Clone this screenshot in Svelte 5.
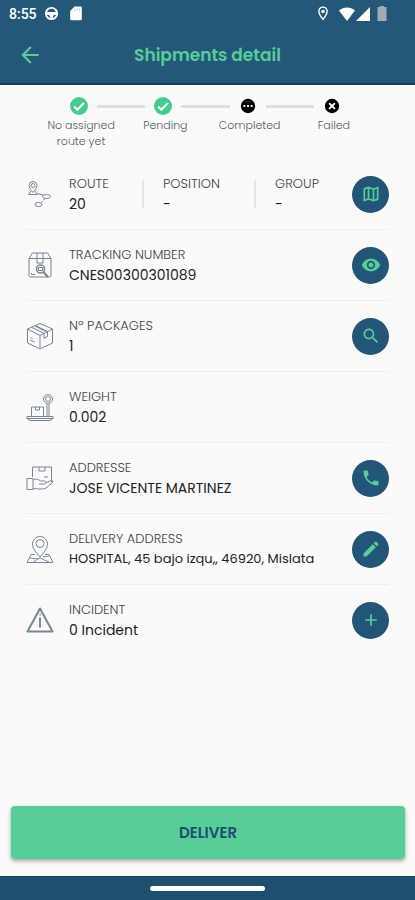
<script>
	const steps = [
		{ label: 'No assigned route yet', state: 'done' },
		{ label: 'Pending', state: 'done' },
		{ label: 'Completed', state: 'waiting' },
		{ label: 'Failed', state: 'failed' }
	]

	const rows = [
		{
			icon: 'route',
			fields: [
				{ label: 'ROUTE', value: '20' },
				{ label: 'POSITION', value: '-' },
				{ label: 'GROUP', value: '-' }
			],
			action: 'map',
			title: 'Show map'
		},
		{ icon: 'tracking', fields: [{ label: 'TRACKING NUMBER', value: 'CNES00300301089' }], action: 'eye', title: 'View tracking' },
		{ icon: 'box', fields: [{ label: 'Nº PACKAGES', value: '1' }], action: 'search', title: 'Search packages' },
		{ icon: 'scale', fields: [{ label: 'WEIGHT', value: '0.002' }] },
		{ icon: 'hand', fields: [{ label: 'ADDRESSE', value: 'JOSE VICENTE MARTINEZ' }], action: 'phone', title: 'Call' },
		{ icon: 'pin', fields: [{ label: 'DELIVERY ADDRESS', value: 'HOSPITAL, 45 bajo izqu,, 46920, Mislata', long: true }], action: 'edit', title: 'Edit address' },
		{ icon: 'warning', fields: [{ label: 'INCIDENT', value: '0 Incident' }], action: 'plus', title: 'Add incident' }
	]

	// material glyphs, 24x24
	const glyphs = {
		map: 'M20.5 3l-.16.03L15 5.1 9 3 3.36 4.9c-.21.07-.36.25-.36.48V20.5c0 .28.22.5.5.5l.16-.03L9 18.9l6 2.1 5.64-1.9c.21-.07.36-.25.36-.48V3.5c0-.28-.22-.5-.5-.5zM10 5.47l4 1.4v11.66l-4-1.4V5.47zm-5 .99l3-1.01v11.7l-3 1.16V6.46zm14 11.08l-3 1.01V6.86l3-1.16v11.84z',
		eye: 'M12 4.5C7 4.5 2.73 7.61 1 12c1.73 4.39 6 7.5 11 7.5s9.27-3.11 11-7.5c-1.73-4.39-6-7.5-11-7.5zM12 17c-2.76 0-5-2.24-5-5s2.24-5 5-5 5 2.24 5 5-2.24 5-5 5zm0-8c-1.66 0-3 1.34-3 3s1.34 3 3 3 3-1.34 3-3-1.34-3-3-3z',
		search: 'M15.5 14h-.79l-.28-.27C15.41 12.59 16 11.11 16 9.5 16 5.91 13.09 3 9.5 3S3 5.91 3 9.5 5.91 16 9.5 16c1.61 0 3.09-.59 4.23-1.57l.27.28v.79l5 4.99L20.49 19l-4.99-5zm-6 0C7.01 14 5 11.99 5 9.5S7.01 5 9.5 5 14 7.01 14 9.5 11.99 14 9.5 14z',
		phone: 'M6.62 10.79c1.44 2.83 3.76 5.14 6.59 6.59l2.2-2.2c.27-.27.67-.36 1.02-.24 1.12.37 2.33.57 3.57.57.55 0 1 .45 1 1V20c0 .55-.45 1-1 1-9.39 0-17-7.61-17-17 0-.55.45-1 1-1h3.5c.55 0 1 .45 1 1 0 1.25.2 2.45.57 3.57.11.35.03.74-.25 1.02l-2.2 2.2z',
		edit: 'M3 17.25V21h3.75L17.81 9.94l-3.75-3.75L3 17.25zM20.71 7.04c.39-.39.39-1.02 0-1.41l-2.34-2.34c-.39-.39-1.02-.39-1.41 0l-1.83 1.83 3.75 3.75 1.83-1.83z',
		plus: 'M19 13h-6v6h-2v-6H5v-2h6V5h2v6h6v2z'
	}
</script>

<div class="screen">
	<header>
		<div class="status">
			<span class="time">8:55</span>
			<svg class="wheel" viewBox="0 0 16 16" width="15" height="15">
				<circle cx="8" cy="8" r="6" fill="none" stroke="#fff" stroke-width="2" />
				<path d="M2 6.5h12v3H10.5L9 13H7L5.5 9.5H2z" fill="#fff" />
			</svg>
			<svg viewBox="0 0 12 15" width="12" height="15">
				<path d="M4.5 .5H10.5a1.3 1.3 0 0 1 1.3 1.3V13a1.3 1.3 0 0 1-1.3 1.3H1.5A1.3 1.3 0 0 1 .2 13V5z" fill="#fff" />
				<path d="M5 2.5v2M7.3 2.5v2M9.5 2.5v2" stroke="#c8d2da" stroke-width="1" />
			</svg>
			<svg class="location" viewBox="0 0 12 16" width="12" height="15">
				<path d="M6 1.2a4.4 4.4 0 0 0-4.4 4.4C1.6 9 6 14.3 6 14.3S10.4 9 10.4 5.6A4.4 4.4 0 0 0 6 1.2z" fill="none" stroke="#fff" stroke-width="1.5" />
				<circle cx="6" cy="5.8" r="1.9" fill="#fff" />
			</svg>
			<svg class="wifi" viewBox="0 0 16 14" width="16" height="14">
				<path d="M8 14L0 3.5C4.5-.5 11.5-.5 16 3.5z" fill="#fff" />
			</svg>
			<svg viewBox="0 0 14 14" width="14" height="14">
				<path d="M14 0v14H0z" fill="#fff" />
			</svg>
			<svg class="battery" viewBox="0 0 10 15" width="10" height="15">
				<path d="M3 0h4v1h2.5V15h-9V1H3z" fill="#a3acb6" />
			</svg>
		</div>
		<div class="bar">
			<button class="back" aria-label="Back">
				<svg viewBox="0 0 24 24" width="26" height="26">
					<path d="M20 11H7.83l5.59-5.59L12 4l-8 8 8 8 1.41-1.41L7.83 13H20v-2z" fill="currentColor" />
				</svg>
			</button>
			<h1>Shipments detail</h1>
		</div>
	</header>

	<main>
		<ol class="steps">
			{#each steps as step}
				<li>
					<div class="marker">
						<svg viewBox="0 0 20 20" width="18" height="18">
							{#if step.state == 'done'}
								<circle cx="10" cy="10" r="10" fill="#45cb90" />
								<path d="M4.5 10.5l3.7 3.7 7.3-7.7" fill="none" stroke="#fff" stroke-width="2.2" />
							{:else if step.state == 'waiting'}
								<circle cx="10" cy="10" r="8" fill="#000" />
								<path d="M5 9h2v2H5zM9 9h2v2H9zM13 9h2v2h-2z" fill="#fff" />
							{:else}
								<circle cx="10" cy="10" r="8" fill="#000" />
								<path d="M6.8 6.8l6.4 6.4M13.2 6.8l-6.4 6.4" stroke="#fff" stroke-width="2.2" />
							{/if}
						</svg>
					</div>
					<span>{step.label}</span>
				</li>
			{/each}
		</ol>

		<ul class="rows">
			{#each rows as row}
				<li class="row">
					<svg class="icon" viewBox="0 0 28 28" width="28" height="28">
						{#if row.icon == 'route'}
							<path d="M7 12.5C4.5 9.5 3 7.5 3 5.5a4 4 0 0 1 8 0c0 2-1.5 4-4 7z" />
							<circle cx="7" cy="5.5" r="2" />
							<path d="M5 11l-2.500 3.500h9L9 11M11.500 13.500l6 1.500" />
							<ellipse cx="20.5" cy="16.5" rx="4" ry="2" />
							<ellipse cx="12.5" cy="24.5" rx="3.5" ry="2" />
							<path d="M19 18.5l-4 4.5" stroke-dasharray="2 1" />
						{:else if row.icon == 'tracking'}
							<path d="M3 7.5L6.5 2h15L25 7.500v17a1.500 1.500 0 0 1-1.500 1.500h-19A1.500 1.500 0 0 1 3 24.500zM3 7.500h22M11 2v10h6V2M5.500 22v1.500H9" />
							<circle cx="14.5" cy="18" r="4" stroke-width="1.6" />
							<path d="M17.5 21l4.5 5" stroke-width="2" />
							<path d="M12.5 16.5h4v3h-4z" />
						{:else if row.icon == 'box'}
							<path d="M14 1.5l12.5 5.5v14L14 27 1.5 21V7zM1.5 7L14 13.5 26.5 7M14 13.5V27M5.5 5.3L18 11.3v5l3.5-1.8v-5L9.5 3.5M9 4l11 5.5M4.5 18l4 2M4.5 15.5l2 1" />
						{:else if row.icon == 'scale'}
							<circle cx="22" cy="6" r="4.5" />
							<circle cx="22" cy="6" r="2.5" />
							<path d="M21 10.5v13M23 10.5v13M5.500 14h12v9.500h-12zM9.500 14v3h4v-3M1 23.500h26v2L24 27.500H4l-3-2zM1 25.500h26" />
						{:else if row.icon == 'hand'}
							<path d="M6.5 13V3h19v15M13 3v4h6V3M1 14.5h6v11H1zM7 16c3-1.8 5.5-.5 7.5 1h4c2 0 2 3 0 3H13M19.5 19l5.5-2.5c2-.5 2.5 1 1 2.5l-6 5c-2 1.5-8 1-13 .5M18 13h4" />
						{:else if row.icon == 'pin'}
							<path d="M14 22C9.5 17 6.5 13 6.5 9a7.5 7.5 0 0 1 15 0c0 4-3 8-7.500 13z" />
							<circle cx="14" cy="8.5" r="4" />
							<path d="M9 19.500H5L1 27.500h26l-4-8h-4M4 23l7 1 3-1 9 4M12 24l-5 3.500M17 22l6-1" />
						{:else}
							<path d="M14 2.5L26.5 25.500h-25z" stroke-width="2" stroke-linejoin="round" />
							<path d="M14 11.500v10M13.500 8.500h1.200" stroke-width="2" />
						{/if}
					</svg>
					<dl class="fields" class:split={row.fields.length > 1}>
						{#each row.fields as field}
							<div class="field">
								<dt>{field.label}</dt>
								<dd class:long={field.long}>{field.value}</dd>
							</div>
						{/each}
					</dl>
					{#if row.action}
						<button class="action" aria-label={row.title}>
							<svg viewBox="0 0 24 24" width="20" height="20">
								<path d={glyphs[row.action]} fill="currentColor" />
							</svg>
						</button>
					{/if}
				</li>
			{/each}
		</ul>

		<button class="deliver">DELIVER</button>
	</main>

	<footer><span class="handle"></span></footer>
</div>

<style>
:global(body) {
	margin: 0;
}

.screen {
	display: flex;
	flex-direction: column;
	min-height: 100vh;
	background: #fafafa;
	color: #222;
	font-family: Poppins, Inter, "Open Sans", sans-serif;
}

header {
	background: #245878;
	border-bottom: 2px solid #123c68;
}

.status {
	display: flex;
	align-items: center;
	height: 27px;
	padding: 0 28px 0 9px;
	color: #fff;
}

.time {
	font: 500 14px/20px Roboto, sans-serif;
}

.wheel {
	margin: 0 11px 0 7px;
}

.location {
	margin-left: auto;
}

.wifi {
	margin: 0 1px 0 10px;
}

.battery {
	margin-left: 7px;
}

.bar {
	display: grid;
	grid-template-columns: 26px 1fr 26px;
	align-items: center;
	height: 56px;
	padding: 0 17px;
	color: #57cd99;
}

h1 {
	margin: 0;
	font-size: 17px;
	font-weight: 600;
	line-height: 24px;
	text-align: center;
}

button {
	padding: 0;
	border: 0;
	font-family: inherit;
	cursor: pointer;
}

svg {
	display: block;
	flex: none;
}

.back {
	background: none;
	color: inherit;
}

main {
	display: flex;
	flex: 1;
	flex-direction: column;
}

ol, ul {
	margin: 0;
	padding: 0;
	list-style: none;
}

.steps {
	display: grid;
	grid-template-columns: repeat(4, 1fr);
	box-sizing: border-box;
	min-height: 74px;
	padding: 10px 39px 0;
}

.steps li {
	text-align: center;
	color: #525a68;
	font-size: 11px;
	font-weight: 300;
	line-height: 16px;
}

.steps span {
	display: block;
	padding: 0 6px;
}

/* half of each connector sits on either side of the marker */
.marker {
	display: grid;
	grid-template-columns: 1fr 18px 1fr;
	gap: 9px;
	align-items: center;
	height: 22px;
	margin: 0 2px 0 -2px;
}

.marker svg {
	grid-column: 2;
	grid-row: 1;
}

.steps li:not(:first-child) .marker::before,
.steps li:not(:last-child) .marker::after {
	content: "";
	height: 3px;
	background: #dedede;
}

.marker::before {
	grid-column: 1;
	grid-row: 1;
}

.marker::after {
	grid-column: 3;
	grid-row: 1;
}

.rows {
	padding: 0 26px;
}

.row {
	display: flex;
	align-items: center;
	height: 70px;
	border-bottom: 1px solid #eee;
}

.row:last-child {
	border-bottom: 0;
}

.icon {
	fill: none;
	stroke: #7a8597;
	stroke-width: 1;
}

.fields {
	flex: 1;
	min-width: 0;
	margin: 0 12px 0 15px;
}

.split {
	display: grid;
	grid-template-columns: 73fr 112fr 86fr;
}

.split .field + .field {
	position: relative;
	padding-left: 21px;
}

.split .field + .field::before {
	content: "";
	position: absolute;
	top: 6px;
	left: 0;
	width: 2px;
	height: 28px;
	background: #e6e6e6;
}

dt, dd {
	margin: 0;
	line-height: 20px;
	white-space: nowrap;
}

dt {
	color: #444;
	font-size: 13px;
	font-weight: 300;
}

dd {
	font-size: 14px;
}

.long {
	font-size: 13px;
}

.action {
	display: grid;
	place-items: center;
	width: 37px;
	height: 37px;
	border-radius: 50%;
	background: #225577;
	color: #57cd99;
}

.deliver {
	height: 53px;
	margin: auto 10px 17px 11px;
	border-radius: 4px;
	background: #57cd99;
	box-shadow: 0 2px 4px rgba(0, 0, 0, .35);
	color: #1d4e70;
	font-size: 15px;
	font-weight: 600;
}

footer {
	display: flex;
	justify-content: center;
	align-items: center;
	height: 23px;
	border-top: 1px solid #123c5c;
	background: #1f4f6f;
}

.handle {
	width: 115px;
	height: 5px;
	border-radius: 3px;
	background: #fff;
}
</style>
